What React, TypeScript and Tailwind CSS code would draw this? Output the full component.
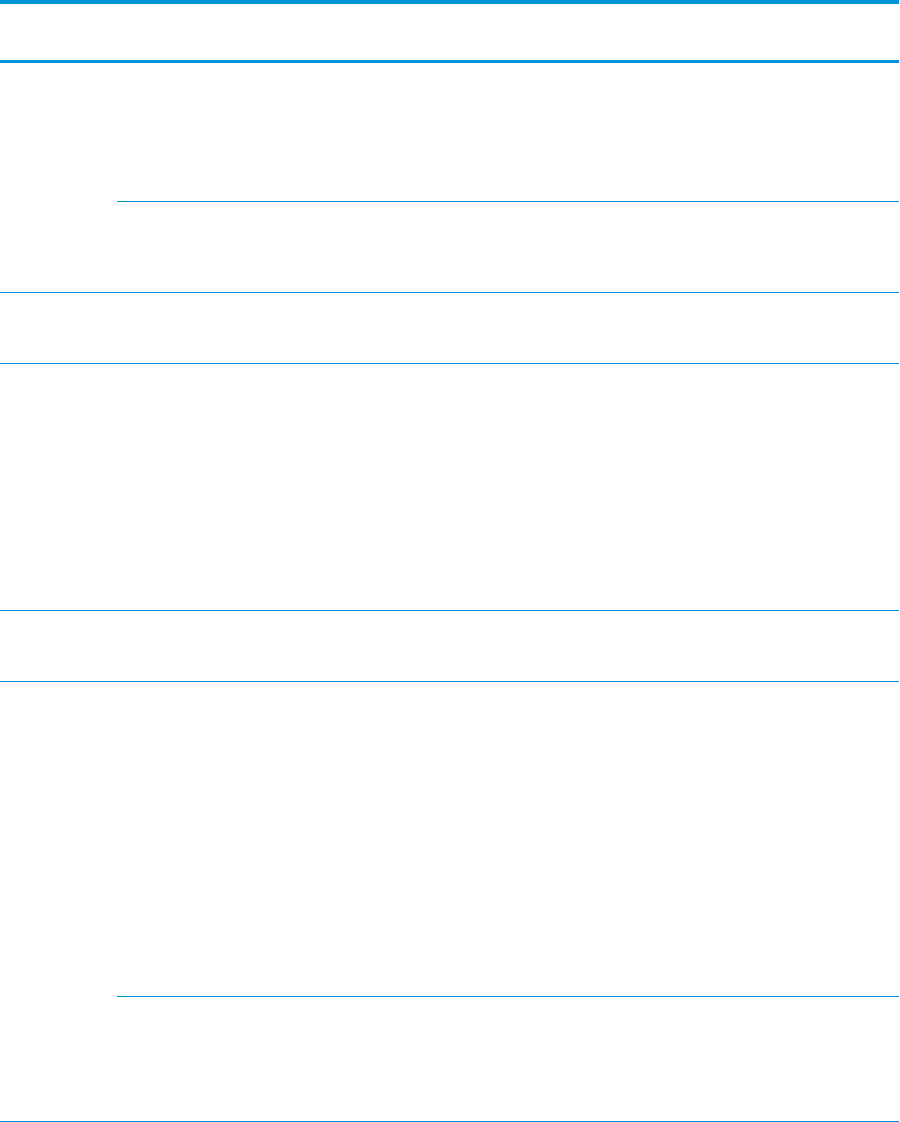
import React from "react";

// Empty spec table: only the blue rules are drawn
const rule = "border-[#0096d6]";

type Row = { heights: number[] };

const rows: Row[] = [
  { heights: [139, 90] },
  { heights: [70] },
  { heights: [246] },
  { heights: [70] },
  { heights: [315, 124] },
];

const hClass: Record<number, string> = {
  139: "h-[139px]",
  90: "h-[90px]",
  70: "h-[70px]",
  246: "h-[246px]",
  315: "h-[315px]",
  124: "h-[124px]",
};

export default function App() {
  return (
    <div className="w-[899px] bg-white font-['Liberation_Sans',sans-serif]">
      {/* header */}
      <div className={`h-[63px] border-t-4 border-b-[3px] ${rule} flex`}>
        <div className="w-[117px]" />
        <div className="flex-1" />
      </div>

      {rows.map((row, i) => (
        <div key={i} className={`flex border-b ${rule}`}>
          <div className="w-[117px] shrink-0" />
          <div className="flex-1 flex flex-col">
            {row.heights.map((h, j) => (
              <div
                key={j}
                className={`${hClass[h]} ${
                  j < row.heights.length - 1 ? `border-b ${rule}` : ""
                }`}
              />
            ))}
          </div>
        </div>
      ))}
    </div>
  );
}
